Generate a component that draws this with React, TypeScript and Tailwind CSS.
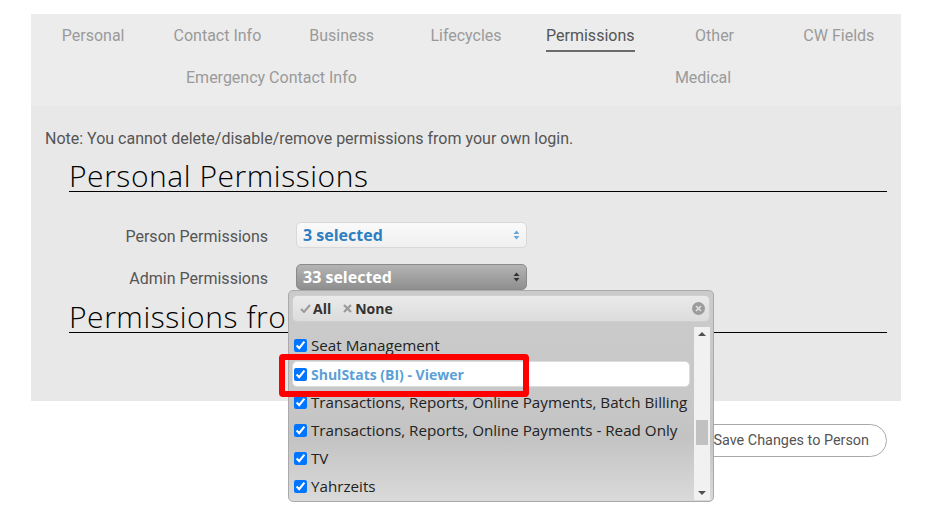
import React from 'react';

const TABS_TOP = ['Personal', 'Contact Info', 'Business', 'Lifecycles', 'Permissions', 'Other', 'CW Fields'];

const ADMIN_OPTIONS = [
  'Seat Management',
  'ShulStats (BI) - Viewer',
  'Transactions, Reports, Online Payments, Batch Billing',
  'Transactions, Reports, Online Payments - Read Only',
  'TV',
  'Yahrzeits',
];

const UpDown = ({ color }: { color: string }) => (
  <svg width="7" height="10" viewBox="0 0 7 10" fill={color}>
    <path d="M3.5 0.5 L6.5 4 L0.5 4 Z" />
    <path d="M3.5 9.5 L6.5 6 L0.5 6 Z" />
  </svg>
);

const CheckMark = () => (
  <svg width="11" height="9" viewBox="0 0 11 9" fill="none" stroke="#9a9a9a" strokeWidth="2">
    <path d="M1 5 L4 8 L10 1" />
  </svg>
);

const CrossMark = () => (
  <svg width="9" height="9" viewBox="0 0 9 9" fill="none" stroke="#9a9a9a" strokeWidth="2.2">
    <path d="M1 1 L8 8 M8 1 L1 8" />
  </svg>
);

const Tab = ({ label }: { label: string }) => {
  const active = label === 'Permissions';
  return (
    <div className="h-[42px] flex items-center justify-center">
      <span
        className={
          active
            ? 'text-[16px] text-[#555] border-b-2 border-[#6b6b6b] leading-[20px] pb-[4px] mt-[6px]'
            : 'text-[16px] text-[#9a9a9a] leading-[20px]'
        }
      >
        {label}
      </span>
    </div>
  );
};

const SectionHeading = ({ children }: { children: React.ReactNode }) => (
  <div
    className="ml-[38px] mr-[14px] h-[31px] leading-[30px] border-b border-black text-[30px] text-black font-light tracking-[0.55px]"
    style={{ fontFamily: '"Open Sans", "DejaVu Sans", sans-serif' }}
  >
    {children}
  </div>
);

const AdminDropdown = () => (
  <div
    className="absolute left-[-8px] top-[26px] w-[426px] h-[212px] border border-[#aaa] rounded-[5px] bg-[linear-gradient(to_bottom,#cbcbcb_0%,#c7c7c7_55%,#c3c3c3_70%,#dadada_100%)] z-10"
    style={{ fontFamily: '"Open Sans", "Liberation Sans", sans-serif' }}
  >
    {/* header with All / None and close */}
    <div className="mx-[3px] mt-[4px] h-[27px] rounded-[5px] border border-[#cfcfcf] bg-[linear-gradient(to_bottom,#eaeaea,#dcdcdc)] flex items-center pl-[7px] pr-[4px] text-[14px] font-bold text-[#333]">
      <span className="flex items-center gap-[2px]">
        <CheckMark />
        <span>All</span>
      </span>
      <span className="flex items-center gap-[3px] ml-[12px]">
        <CrossMark />
        <span>None</span>
      </span>
      <span className="ml-auto w-[13px] h-[13px] rounded-full bg-[#9c9c9c] flex items-center justify-center">
        <svg width="7" height="7" viewBox="0 0 7 7" stroke="#e0e0e0" strokeWidth="1.6">
          <path d="M1 1 L6 6 M6 1 L1 6" />
        </svg>
      </span>
    </div>

    <div className="flex mt-[5px] h-[173px]">
      <ul className="flex-1 pt-[5px] pl-[3px] pr-[4px] flex flex-col gap-[1px]">
        {ADMIN_OPTIONS.map((opt) => {
          const hover = opt.startsWith('ShulStats');
          return (
            <li
              key={opt}
              className={
                hover
                  ? 'h-[27px] my-[1px] flex items-center gap-[4px] pl-[1px] rounded-[5px] bg-white border border-[#ddd] text-[#5b9fd6] font-bold text-[14px] whitespace-nowrap overflow-hidden'
                  : 'h-[28px] flex items-center gap-[4px] pl-[2px] text-[#222] text-[15.2px] whitespace-nowrap overflow-hidden'
              }
            >
              <input type="checkbox" defaultChecked className="w-[13px] h-[13px] m-0 shrink-0" />
              <span>{opt}</span>
            </li>
          );
        })}
      </ul>
      {/* scrollbar */}
      <div className="w-[16px] bg-[#f1f1f1] flex flex-col items-center justify-between py-[5px] mr-[3px]">
        <svg width="8" height="4" viewBox="0 0 8 4" fill="#505050">
          <path d="M4 0 L8 4 L0 4 Z" />
        </svg>
        <div className="w-[12px] h-[25px] bg-[#c1c1c1] mt-[84px] mb-auto" />
        <svg width="8" height="4" viewBox="0 0 8 4" fill="#505050">
          <path d="M0 0 L8 0 L4 4 Z" />
        </svg>
      </div>
    </div>

    {/* highlight around the hovered row */}
    <div className="absolute left-[-10px] top-[63px] w-[250px] h-[43px] border-[6px] border-[#ff0000] rounded-[4px] pointer-events-none" />
  </div>
);

export default function App() {
  return (
    <div className="min-h-[521px] bg-white pt-[14px]" style={{ fontFamily: 'Roboto, "Liberation Sans", sans-serif' }}>
      <div className="ml-[31px] w-[870px]">
        {/* tabs */}
        <div className="bg-[#ececec] pt-[1px] pb-[7px]">
          <div className="grid grid-cols-7">
            {TABS_TOP.map((t) => (
              <Tab key={t} label={t} />
            ))}
          </div>
          <div className="flex pl-[155px]">
            <Tab label="Emergency Contact Info" />
            <div className="ml-[318px]">
              <Tab label="Medical" />
            </div>
          </div>
        </div>

        {/* permissions body */}
        <div className="bg-[#e8e8e8] pt-[23px] pb-[68px]">
          <p className="ml-[14px] text-[16px] leading-[20px] text-[#555]">
            Note: You cannot delete/disable/remove permissions from your own login.
          </p>
          <div className="mt-[12px]">
            <SectionHeading>Personal Permissions</SectionHeading>
          </div>

          <div className="mt-[30px] grid grid-cols-[237px_231px] gap-x-[28px] gap-y-[16px] items-center text-[16px] text-[#555]">
            <div className="text-right h-[26px] leading-[22px] pt-[4px]">Person Permissions</div>
            <div
              className="h-[26px] rounded-[5px] border border-[#d8d8d8] bg-[linear-gradient(to_bottom,#fafafa,#f0f0f0)] flex items-center pl-[6px] pr-[6px]"
              style={{ fontFamily: '"Open Sans", "Liberation Sans", sans-serif' }}
            >
              <span className="text-[16px] font-bold text-[#2d7fc1]">3 selected</span>
              <span className="ml-auto">
                <UpDown color="#6aa6dc" />
              </span>
            </div>

            <div className="text-right h-[26px] leading-[22px] pt-[4px]">Admin Permissions</div>
            <div className="relative">
              <div
                className="h-[26px] rounded-[5px] border border-[#8a8a8a] bg-[linear-gradient(to_bottom,#b4b4b4,#8f8f8f)] flex items-center pl-[6px] pr-[6px]"
                style={{ fontFamily: '"Open Sans", "Liberation Sans", sans-serif' }}
              >
                <span className="text-[16px] font-bold text-white">33 selected</span>
                <span className="ml-auto">
                  <UpDown color="#333" />
                </span>
              </div>
              <AdminDropdown />
            </div>
          </div>

          <div className="mt-[12px]">
            <SectionHeading>Permissions from Roles</SectionHeading>
          </div>
        </div>

        {/* footer */}
        <div className="flex justify-end mr-[14px] mt-[23px]">
          <button className="h-[33px] px-[17px] rounded-full border border-[#aaa] bg-white text-[14.4px] text-[#555]">
            Save Changes to Person
          </button>
        </div>
      </div>
    </div>
  );
}
